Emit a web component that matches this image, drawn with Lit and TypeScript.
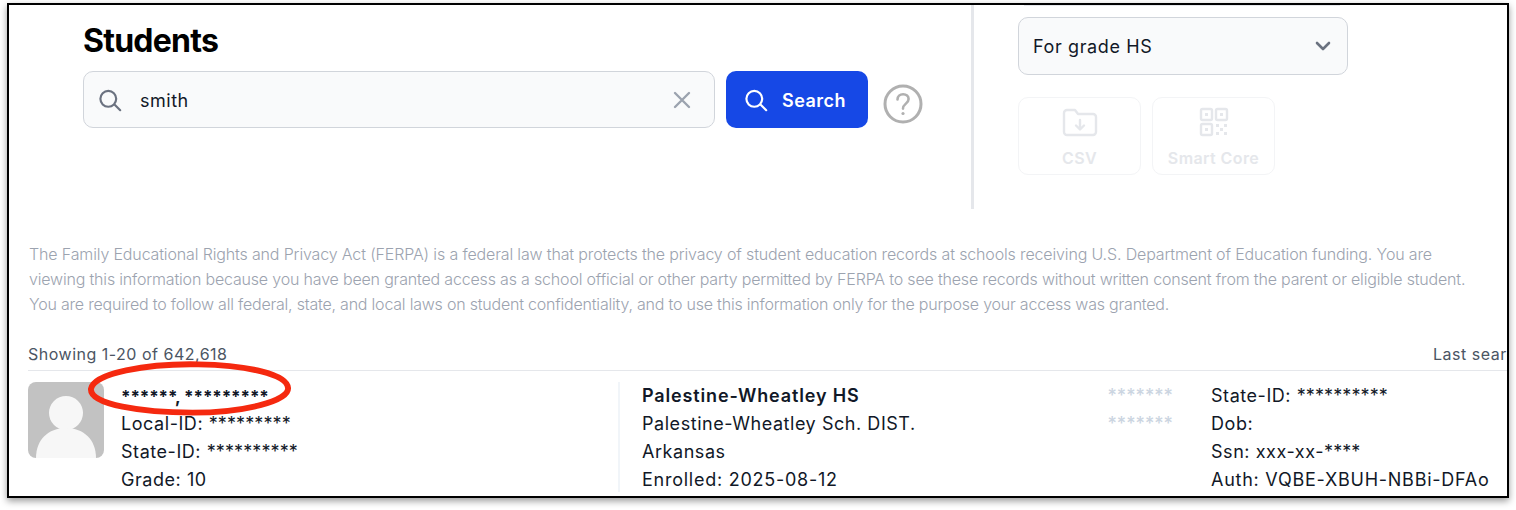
import { LitElement, html, css, svg } from "lit";
import { customElement } from "lit/decorators.js";

const searchIcon = (cls: string) => html`<svg class=${cls} viewBox="0 0 24 24" fill="none" stroke="currentColor" stroke-width="2" stroke-linecap="round" stroke-linejoin="round"><path d="M20.5 20.5 15.2 15.2M16.8 10a7.3 7.3 0 1 1-14.6 0 7.3 7.3 0 0 1 14.6 0Z"/></svg>`;

@customElement("app-root")
export class AppRoot extends LitElement {
  static styles = css`
    :host { display: block; width: 1516px; height: 510px; background: #fff; overflow: hidden; font-family: Inter, "Liberation Sans", sans-serif; color: #111827; }
    * { box-sizing: border-box; }
    .frame { position: relative; margin: 3px 0 0 7px; width: 1502px; height: 495px; border: 2px solid #000; box-shadow: 0 3px 7px rgba(0,0,0,.4); overflow: hidden; background: #fff; }
    .top { display: flex; height: 204px; }
    .left { width: 962px; padding: 17px 0 0 74px; }
    h1 { margin: 0; font-size: 32px; line-height: 38px; font-weight: 700; letter-spacing: -0.75px; color: #000; }
    .search-row { display: flex; margin-top: 11px; }
    .input { width: 632px; height: 57px; border: 1px solid #d1d5db; border-radius: 10px; background: #f9fafb; display: flex; align-items: center; padding: 2px 20px 0 14px; font-size: 18px; letter-spacing: .5px; color: #111827; }
    .input .ic { width: 26px; height: 26px; color: #6b7280; margin-right: 16px; }
    .input span { flex: 1; }
    .x { width: 24px; height: 24px; color: #9ca3af; margin-top: -2px; }
    .btn { margin-left: 11px; width: 142px; height: 57px; border-radius: 10px; background: #1648e6; color: #fff; display: flex; align-items: center; gap: 12px; padding: 2px 0 0 18px; font-size: 18px; font-weight: 600; letter-spacing: .5px; }
    .btn .ic { width: 26px; height: 26px; }
    .help { width: 40px; height: 40px; margin: 13px 0 0 15px; color: #b0b0b0; }
    .right { border-left: 3px solid #e5e7eb; padding-left: 44px; position: relative; flex: 1; }
    .sliver { height: 1px; width: 316px; margin-left: 6px; background: #e5e7eb; }
    .select { margin-top: 11px; width: 330px; height: 58px; border: 1px solid #d1d5db; border-radius: 10px; background: #f9fafb; display: flex; align-items: center; justify-content: space-between; padding: 0 14px; font-size: 18px; letter-spacing: .62px; color: #111827; }
    .chev { width: 20px; height: 20px; color: #6b7280; }
    .tiles { display: flex; gap: 11px; margin-top: 22px; }
    .tile { width: 123px; height: 78px; border: 1px solid #f3f4f6; border-radius: 10px; display: flex; flex-direction: column; align-items: center; padding-top: 8px; color: #e5e7eb; font-size: 16px; font-weight: 600; letter-spacing: .4px; }
    .tile svg { width: 36px; height: 36px; margin-bottom: 6px; }
    .ferpa { margin: 33px 0 0 20px; width: 1460px; font-size: 16px; line-height: 25px; font-weight: 300; color: #9ca3af; white-space: nowrap; }
    .l1 { letter-spacing: -0.145px; }
    .l2 { letter-spacing: -0.18px; }
    .l3 { letter-spacing: -0.21px; }
    .meta { display: flex; justify-content: space-between; margin: 25px 0 0 19px; height: 29px; border-bottom: 1px solid #e5e7eb; font-size: 16px; letter-spacing: .5px; line-height: 25px; color: #4b5563; white-space: nowrap; }
    .meta .last { width: 74px; overflow: hidden; }
    .row { display: flex; margin: 11px 0 0 19px; font-size: 18px; letter-spacing: .55px; line-height: 28px; color: #111827; white-space: nowrap; }
    .avatar { width: 76px; height: 76px; border-radius: 8px; background: #c2c2c2; overflow: hidden; flex: none; }
    .avatar svg { display: block; width: 76px; height: 76px; }
    .who { width: 514px; padding-left: 17px; flex: none; }
    .who .name { font-weight: 700; font-size: 17px; letter-spacing: -.1px; margin-top: 1px; margin-bottom: -1px; }
    .m { letter-spacing: .1px; }
    .school { width: 466px; flex: none; border-left: 2px solid #f1f5f9; padding-left: 22px; height: 110px; }
    .school b { font-weight: 600; letter-spacing: .85px; }
    .date { letter-spacing: .75px; }
    .stars { width: 89px; flex: none; text-align: right; color: #cbd5e1; font-size: 18px; font-weight: 500; letter-spacing: 0; }
    .ids { padding-left: 38px; }
    .auth { letter-spacing: .75px; }
    .ring { position: absolute; left: 79px; top: 354px; width: 203px; height: 58px; overflow: visible; }
  `;

  render() {
    return html`<div class="frame">
      <div class="top">
        <div class="left">
          <h1>Students</h1>
          <div class="search-row">
            <div class="input">${searchIcon("ic")}<span>smith</span>
              <svg class="x" viewBox="0 0 24 24" fill="none" stroke="currentColor" stroke-width="2.4" stroke-linecap="round"><path d="M5 5l14 14M19 5 5 19"/></svg>
            </div>
            <div class="btn">${searchIcon("ic")}Search</div>
            <svg class="help" viewBox="0 0 40 40" fill="none" stroke="currentColor"><circle cx="20" cy="20" r="18" stroke-width="3"/><path d="M14.5 15.5c0-3.2 2.4-5.3 5.6-5.3s5.5 2 5.5 4.8c0 4.7-5.6 4.6-5.6 9.6" stroke-width="2.6" stroke-linecap="round"/><circle cx="20" cy="29.5" r="1.6" fill="currentColor" stroke="none"/></svg>
          </div>
        </div>
        <div class="right">
          <div class="sliver"></div>
          <div class="select"><span>For grade HS</span>
            <svg class="chev" viewBox="0 0 20 20" fill="none" stroke="currentColor" stroke-width="2.6" stroke-linecap="round" stroke-linejoin="round"><path d="M4 7l6 6 6-6"/></svg>
          </div>
          <div class="tiles">
            <div class="tile">
              <svg viewBox="0 0 36 36" fill="none" stroke="currentColor" stroke-width="2.4" stroke-linecap="round" stroke-linejoin="round"><path d="M2 7a3 3 0 0 1 3-3h8l3 4h15a3 3 0 0 1 3 3v15a3 3 0 0 1-3 3H5a3 3 0 0 1-3-3Z"/><path d="M18 14v9M14 19.5l4 4 4-4"/></svg>
              CSV
            </div>
            <div class="tile">
              <svg viewBox="0 0 36 36" fill="none" stroke="currentColor" stroke-width="2.4" stroke-linejoin="round">
                ${svg`<rect x="5" y="3" width="11" height="11" rx="1.5"/><rect x="20" y="3" width="11" height="11" rx="1.5"/><rect x="5" y="18" width="11" height="11" rx="1.5"/>
                <g fill="currentColor" stroke="none"><rect x="9" y="7" width="3" height="3"/><rect x="24" y="7" width="3" height="3"/><rect x="9" y="22" width="3" height="3"/><rect x="20" y="18" width="3" height="3"/><rect x="28" y="18" width="3" height="3"/><rect x="24" y="22" width="3" height="3"/><rect x="20" y="26" width="3" height="3"/><rect x="28" y="26" width="3" height="3"/></g>`}
              </svg>
              Smart Core
            </div>
          </div>
        </div>
      </div>
      <div class="ferpa">
        <div class="l1">The Family Educational Rights and Privacy Act (FERPA) is a federal law that protects the privacy of student education records at schools receiving U.S. Department of Education funding. You are</div>
        <div class="l2">viewing this information because you have been granted access as a school official or other party permitted by FERPA to see these records without written consent from the parent or eligible student.</div>
        <div class="l3">You are required to follow all federal, state, and local laws on student confidentiality, and to use this information only for the purpose your access was granted.</div>
      </div>
      <div class="meta"><span>Showing 1-20 of 642,618</span><span class="last">Last search</span></div>
      <div class="row">
        <div class="avatar"><svg viewBox="0 0 76 76"><circle cx="38" cy="31" r="17" fill="#f7f7f7"/><path d="M8 76C8 58 20 46 38 46s30 12 30 30Z" fill="#f7f7f7"/></svg></div>
        <div class="who">
          <div class="name">******, *********</div>
          <div>Local-ID: <span class="m">*********</span></div>
          <div>State-ID: <span class="m">**********</span></div>
          <div>Grade: 10</div>
        </div>
        <div class="school">
          <div><b>Palestine-Wheatley HS</b></div>
          <div>Palestine-Wheatley Sch. DIST.</div>
          <div>Arkansas</div>
          <div class="date">Enrolled: 2025-08-12</div>
        </div>
        <div class="stars"><div>*******</div><div>*******</div></div>
        <div class="ids">
          <div>State-ID: <span class="m">**********</span></div>
          <div>Dob:</div>
          <div>Ssn: xxx-xx-<span class="m">****</span></div>
          <div class="auth">Auth: VQBE-XBUH-NBBi-DFAo</div>
        </div>
      </div>
      <svg class="ring" viewBox="0 0 206 58"><path d="M3 30C5 14 60 4 112 5c50 1 90 10 91 24 1 13-44 25-97 25C55 54 2 46 3 30Z" fill="none" stroke="#f5290f" stroke-width="6"/></svg>
    </div>`;
  }
}
